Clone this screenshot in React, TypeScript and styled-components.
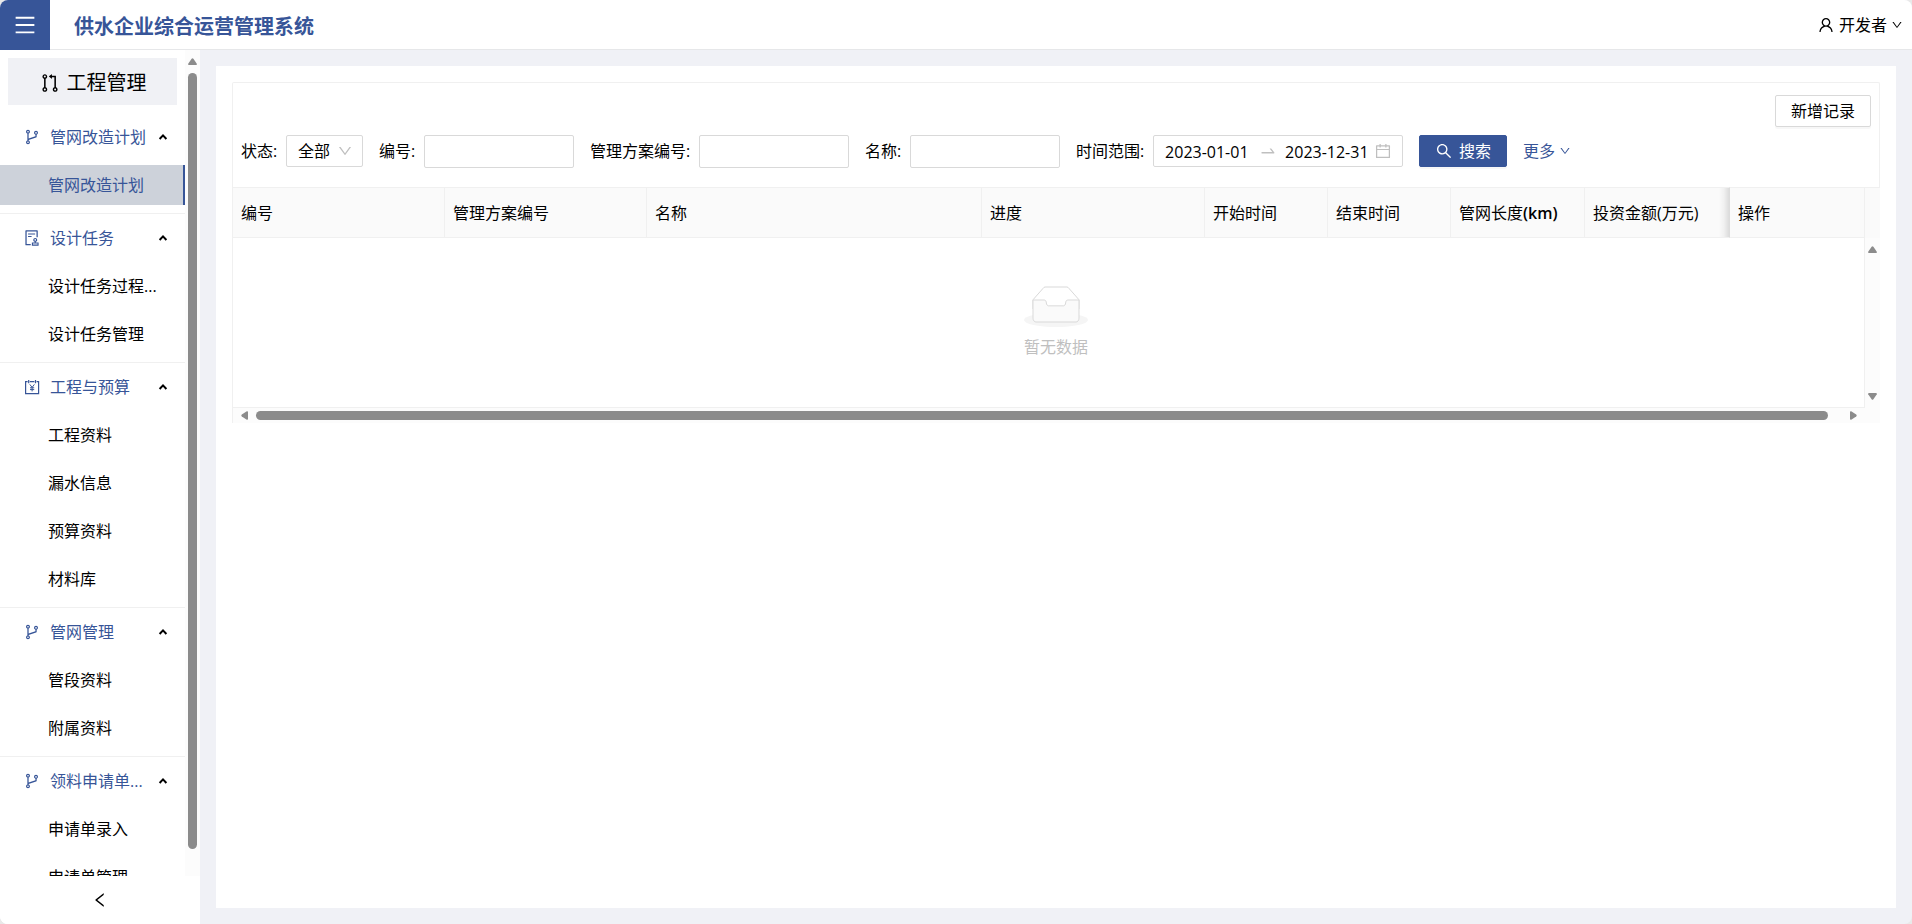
import React from "react";
import styled, { createGlobalStyle, css } from "styled-components";
import {
  AiOutlineAudit,
  AiOutlineBranches,
  AiOutlineCalendar,
  AiOutlineDown,
  AiOutlineLeft,
  AiOutlineMenu,
  AiOutlinePullRequest,
  AiOutlineSearch,
  AiOutlineSwapRight,
  AiOutlineUser,
} from "react-icons/ai";

const primary = "#375598";
const line = "#f0f0f0";
const control = "#d9d9d9";
const track = "#fcfcfc";
const thumb = "#8b8b8b";

const GlobalStyle = createGlobalStyle`
  *, *::before, *::after { box-sizing: border-box; }
  body {
    margin: 0;
    background: #e9e9e9;
    color: #000;
    font-family: "Open Sans", "Noto Sans CJK SC", sans-serif;
    font-size: 16px;
    line-height: 24px;
  }
  button, input, select { font: inherit; color: inherit; }
  button { cursor: pointer; }
  svg { flex: none; display: block; }
`;

const Shell = styled.div`
  display: flex;
  flex-direction: column;
  height: 100vh;
  border-radius: 8px;
  overflow: hidden;
  background: #f0f1f6;
`;

const Header = styled.header`
  display: flex;
  align-items: center;
  flex: none;
  height: 50px;
  padding-right: 9px;
  background: #fff;
  box-shadow: inset 0 -1px 0 #e6e7e9;
`;

const MenuButton = styled.button`
  display: flex;
  align-items: center;
  justify-content: center;
  width: 50px;
  height: 50px;
  padding: 0;
  border: 0;
  color: #fff;
  background: ${primary};
`;

const Brand = styled.h1`
  flex: 1;
  margin: 0;
  padding: 3px 0 0 24px;
  font-size: 20px;
  font-weight: 700;
  color: ${primary};
`;

const UserButton = styled.button`
  display: flex;
  align-items: center;
  gap: 4px;
  padding: 0;
  border: 0;
  background: none;
`;

const Body = styled.div`
  display: flex;
  flex: 1;
  min-height: 0;
`;

const Sidebar = styled.aside`
  display: flex;
  flex-direction: column;
  flex: none;
  width: 200px;
  background: #fff;
`;

const SidebarScroll = styled.div`
  display: flex;
  flex: 1;
  min-height: 0;
`;

const Menu = styled.nav`
  flex: 1;
  min-width: 0;
  overflow: hidden;
`;

const VerticalTrack = styled.div`
  display: flex;
  flex-direction: column;
  align-items: center;
  gap: 8px;
  width: 15px;
  padding: 8px 0 27px;
  background: ${track};
`;

const VerticalThumb = styled.div`
  flex: 1;
  width: 9px;
  border-radius: 5px;
  background: ${thumb};
`;

const ModuleTitle = styled.h2`
  display: flex;
  align-items: center;
  justify-content: center;
  gap: 6px;
  height: 47px;
  margin: 8px;
  padding-top: 2px;
  font-size: 20px;
  font-weight: 400;
  background: #f0f1f5;
`;

const Group = styled.section`
  padding: 4px 0 8px;

  & + & {
    border-top: 1px solid ${line};
  }
`;

const GroupButton = styled.button`
  display: flex;
  align-items: center;
  width: 100%;
  height: 40px;
  padding: 0 17px 0 23px;
  border: 0;
  background: none;
  color: ${primary};
  text-align: left;
`;

const GroupName = styled.span`
  flex: 1;
  min-width: 0;
  padding-left: 9px;
  overflow: hidden;
  white-space: nowrap;
`;

const MenuLink = styled.a<{ $active?: boolean }>`
  display: block;
  height: 40px;
  margin-top: 8px;
  padding-left: 48px;
  color: #000;
  line-height: 40px;
  text-decoration: none;
  white-space: nowrap;

  ${(p) =>
    p.$active &&
    css`
      color: ${primary};
      background: #cdd2da;
      box-shadow: inset -2px 0 0 ${primary};
    `}
`;

const CollapseButton = styled.button`
  display: flex;
  align-items: center;
  justify-content: center;
  height: 48px;
  padding: 0;
  border: 0;
  background: #fff;
`;

const Main = styled.main`
  flex: 1;
  min-width: 0;
  padding: 16px;
`;

const Panel = styled.div`
  height: 100%;
  padding: 16px;
  background: #fff;
`;

const Toolbar = styled.div`
  display: flex;
  flex-direction: column;
  gap: 8px;
  padding: 12px 8px 19px;
  border: 1px solid ${line};
  border-bottom: 0;
  border-radius: 2px 2px 0 0;
`;

const Actions = styled.div`
  display: flex;
  justify-content: flex-end;
`;

const Button = styled.button<{ $primary?: boolean }>`
  display: flex;
  align-items: center;
  gap: 6px;
  height: 32px;
  padding: 0 15px;
  border: 1px solid ${(p) => (p.$primary ? primary : control)};
  border-radius: 2px;
  color: ${(p) => (p.$primary ? "#fff" : "#000")};
  background: ${(p) => (p.$primary ? primary : "#fff")};
  box-shadow: 0 2px 0 rgba(0, 0, 0, 0.03);
`;

const Filters = styled.form`
  display: flex;
  align-items: flex-start;
  gap: 16px;
`;

const Field = styled.div`
  display: flex;
`;

const Label = styled.label`
  line-height: 32px;
  white-space: nowrap;

  &::after {
    content: ":";
    display: inline-block;
    width: 5px;
    margin-right: 8px;
  }
`;

const TextInput = styled.input`
  width: 150px;
  height: 33px;
  padding: 0 11px;
  border: 1px solid ${control};
  border-radius: 2px;
  background: #fff;
`;

const SelectBox = styled.div`
  display: grid;
  align-items: center;

  & > * {
    grid-area: 1 / 1;
  }

  svg {
    justify-self: end;
    margin-right: 10px;
    color: #bfbfbf;
    pointer-events: none;
  }
`;

const Select = styled.select`
  appearance: none;
  width: 77px;
  height: 32px;
  padding: 0 11px;
  border: 1px solid ${control};
  border-radius: 2px;
  background: #fff;
`;

const DateRange = styled.div`
  display: flex;
  align-items: center;
  height: 32px;
  width: 250px;
  padding: 0 10px 0 11px;
  border: 1px solid ${control};
  border-radius: 2px;
  color: #bfbfbf;
`;

const DateInput = styled.input`
  width: 86px;
  padding: 2px 0 0;
  border: 0;
  background: none;
  color: #000;
`;

const DateSeparator = styled.span`
  padding: 0 8px;
`;

const CalendarMark = styled.span`
  margin-left: auto;
`;

const MoreLink = styled.a`
  display: flex;
  align-items: center;
  gap: 4px;
  height: 32px;
  color: ${primary};
  text-decoration: none;
`;

const Table = styled.table`
  width: 100%;
  table-layout: fixed;
  border-spacing: 0;
  border-left: 1px solid ${line};
`;

const Th = styled.th<{ $shade?: boolean }>`
  height: 51px;
  padding: 0 8px;
  border: solid ${line};
  border-width: 1px 1px 1px 0;
  font-weight: 400;
  text-align: left;
  white-space: nowrap;
  background: #fafafa;

  ${(p) =>
    p.$shade &&
    css`
      border-right-color: #dcdcdc;
      background: linear-gradient(
          to left,
          rgba(0, 0, 0, 0.12),
          rgba(0, 0, 0, 0.04) 5px,
          transparent 10px
        )
        #fafafa;
    `}
`;

const Unit = styled.span`
  font-weight: 600;
`;

const GutterTh = styled.th`
  padding: 0;
  border-top: 1px solid ${line};
  background: #fafafa;
`;

const EmptyCell = styled.td`
  height: 170px;
  padding: 0 0 0 15px;
  border: solid ${line};
  border-width: 0 1px 1px 0;
`;

const Empty = styled.div`
  display: flex;
  flex-direction: column;
  align-items: center;
  gap: 8px;
  color: #bfbfbf;
`;

const GutterCell = styled.td`
  height: 170px;
  padding: 0;
  background: ${track};
`;

const BodyTrack = styled.div`
  display: flex;
  flex-direction: column;
  align-items: center;
  justify-content: space-between;
  height: 170px;
  padding: 8px 0;
`;

const HorizontalTrack = styled.div`
  display: flex;
  align-items: center;
  gap: 8px;
  height: 15px;
  padding: 0 23px 0 8px;
  border-left: 1px solid ${line};
  background: ${track};
`;

const HorizontalThumb = styled.div`
  flex: 1;
  height: 9px;
  margin-right: 14px;
  border-radius: 5px;
  background: ${thumb};
`;

const arrowShapes = {
  up: "M3.6 .8Q4.5 -.2 5.4 .8L8.8 5.8Q9 7 8 7H1Q0 7 .2 5.8Z",
  down: "M3.6 6.2Q4.5 7.2 5.4 6.2L8.8 1.2Q9 0 8 0H1Q0 0 .2 1.2Z",
  left: "M.8 3.6Q-.2 4.5 .8 5.4L5.8 8.8Q7 9 7 8V1Q7 0 5.8 .2Z",
  right: "M6.2 3.6Q7.2 4.5 6.2 5.4L1.2 8.8Q0 9 0 8V1Q0 0 1.2 .2Z",
};

/* Scroll bar arrow head; sideways arrows swap the box's sides. */
function ScrollArrow({ to }: { to: keyof typeof arrowShapes }) {
  const sideways = to === "left" || to === "right";
  return (
    <svg
      width={sideways ? 7 : 9}
      height={sideways ? 9 : 7}
      fill={thumb}
      aria-hidden="true"
    >
      <path d={arrowShapes[to]} />
    </svg>
  );
}

function GroupCaret() {
  return (
    <svg width="10" height="10" viewBox="0 0 10 10" aria-hidden="true">
      <path d="M1.6 7L5 3.4L8.4 7" fill="none" stroke="#000" strokeWidth="2" />
    </svg>
  );
}

/* Calendar sheet with a yuan sign. */
function BudgetIcon({ size }: { size: number }) {
  return (
    <svg
      width={size}
      height={size}
      viewBox="0 0 18 18"
      fill="none"
      stroke="currentColor"
      strokeWidth="1.2"
      aria-hidden="true"
    >
      <path d="M4.6 3.6H2.6V15.6H15.6V3.6H13.6M6.8 3.6H11.4" />
      <path d="M5.7 2V5.2M12.5 2V5.2" />
      <path d="M6.8 6.4L9.1 9.4L11.4 6.4M9.1 9.4V13.4M7 9.8H11.2M7 11.6H11.2" strokeWidth="1" />
    </svg>
  );
}

function EmptyBox() {
  return (
    <svg width="64" height="41" viewBox="0 0 64 41" aria-hidden="true">
      <g transform="translate(0 1)" fill="none" fillRule="evenodd">
        <ellipse fill="#f5f5f5" cx="32" cy="33" rx="32" ry="7" />
        <g fillRule="nonzero" stroke="#d9d9d9">
          <path d="M55 12.76L44.854 1.258C44.367.474 43.656 0 42.907 0H21.093c-.749 0-1.46.474-1.947 1.257L9 12.761V22h46v-9.24z" />
          <path
            d="M41.613 15.931c0-1.605.994-2.93 2.227-2.931H55v18.137C55 33.26 53.68 35 52.05 35h-40.1C10.32 35 9 33.259 9 31.137V13h11.16c1.233 0 2.227 1.323 2.227 2.928v.022c0 1.605 1.005 2.901 2.237 2.901h14.752c1.232 0 2.237-1.308 2.237-2.913v-.007z"
            fill="#fafafa"
          />
        </g>
      </g>
    </svg>
  );
}

const groups = [
  { name: "管网改造计划", Icon: AiOutlineBranches, items: ["管网改造计划"] },
  { name: "设计任务", Icon: AiOutlineAudit, items: ["设计任务过程...", "设计任务管理"] },
  {
    name: "工程与预算",
    Icon: BudgetIcon,
    items: ["工程资料", "漏水信息", "预算资料", "材料库"],
  },
  { name: "管网管理", Icon: AiOutlineBranches, items: ["管段资料", "附属资料"] },
  { name: "领料申请单...", Icon: AiOutlineBranches, items: ["申请单录入", "申请单管理"] },
];

const columns: { title: string; unit?: string; width?: number }[] = [
  { title: "编号", width: 212 },
  { title: "管理方案编号", width: 202 },
  { title: "名称" },
  { title: "进度", width: 223 },
  { title: "开始时间", width: 123 },
  { title: "结束时间", width: 123 },
  { title: "管网长度", unit: "(km)", width: 134 },
  { title: "投资金额(万元)", width: 145 },
  { title: "操作", width: 135 },
];

function SideMenu() {
  return (
    <Sidebar>
      <SidebarScroll>
        <Menu>
          <ModuleTitle>
            <AiOutlinePullRequest size={22} />
            工程管理
          </ModuleTitle>
          {groups.map(({ name, Icon, items }, g) => (
            <Group key={name}>
              <GroupButton type="button" aria-expanded="true">
                <Icon size={18} />
                <GroupName>{name}</GroupName>
                <GroupCaret />
              </GroupButton>
              {items.map((item) => (
                <MenuLink key={item} href="#" $active={g === 0}>
                  {item}
                </MenuLink>
              ))}
            </Group>
          ))}
        </Menu>
        <VerticalTrack>
          <ScrollArrow to="up" />
          <VerticalThumb />
        </VerticalTrack>
      </SidebarScroll>
      <CollapseButton type="button" aria-label="收起菜单">
        <AiOutlineLeft size={18} />
      </CollapseButton>
    </Sidebar>
  );
}

function FilterBar() {
  return (
    <Filters onSubmit={(e) => e.preventDefault()}>
      <Field>
        <Label htmlFor="status">状态</Label>
        <SelectBox>
          <Select id="status">
            <option>全部</option>
          </Select>
          <AiOutlineDown size={16} />
        </SelectBox>
      </Field>
      <Field>
        <Label htmlFor="code">编号</Label>
        <TextInput id="code" />
      </Field>
      <Field>
        <Label htmlFor="plan">管理方案编号</Label>
        <TextInput id="plan" />
      </Field>
      <Field>
        <Label htmlFor="name">名称</Label>
        <TextInput id="name" />
      </Field>
      <Field>
        <Label htmlFor="from">时间范围</Label>
        <DateRange>
          <DateInput id="from" defaultValue="2023-01-01" />
          <DateSeparator>
            <AiOutlineSwapRight size={18} />
          </DateSeparator>
          <DateInput aria-label="结束日期" defaultValue="2023-12-31" />
          <CalendarMark>
            <AiOutlineCalendar size={18} />
          </CalendarMark>
        </DateRange>
      </Field>
      <Button type="submit" $primary>
        <AiOutlineSearch size={18} />
        搜索
      </Button>
      <MoreLink href="#">
        更多
        <AiOutlineDown size={12} />
      </MoreLink>
    </Filters>
  );
}

function RecordTable() {
  return (
    <>
      <Table>
        <colgroup>
          {columns.map((c) => (
            <col key={c.title} width={c.width} />
          ))}
          <col width={15} />
        </colgroup>
        <thead>
          <tr>
            {columns.map((c, i) => (
              <Th key={c.title} $shade={i === columns.length - 2}>
                {c.title}
                {c.unit && <Unit>{c.unit}</Unit>}
              </Th>
            ))}
            <GutterTh />
          </tr>
        </thead>
        <tbody>
          <tr>
            <EmptyCell colSpan={columns.length}>
              <Empty>
                <EmptyBox />
                暂无数据
              </Empty>
            </EmptyCell>
            <GutterCell>
              <BodyTrack>
                <ScrollArrow to="up" />
                <ScrollArrow to="down" />
              </BodyTrack>
            </GutterCell>
          </tr>
        </tbody>
      </Table>
      <HorizontalTrack>
        <ScrollArrow to="left" />
        <HorizontalThumb />
        <ScrollArrow to="right" />
      </HorizontalTrack>
    </>
  );
}

export default function App() {
  return (
    <>
      <GlobalStyle />
      <Shell>
        <Header>
          <MenuButton type="button" aria-label="菜单">
            <AiOutlineMenu size={24} />
          </MenuButton>
          <Brand>供水企业综合运营管理系统</Brand>
          <UserButton type="button">
            <AiOutlineUser size={18} />
            开发者
            <AiOutlineDown size={12} />
          </UserButton>
        </Header>
        <Body>
          <SideMenu />
          <Main>
            <Panel>
              <Toolbar>
                <Actions>
                  <Button type="button">新增记录</Button>
                </Actions>
                <FilterBar />
              </Toolbar>
              <RecordTable />
            </Panel>
          </Main>
        </Body>
      </Shell>
    </>
  );
}
